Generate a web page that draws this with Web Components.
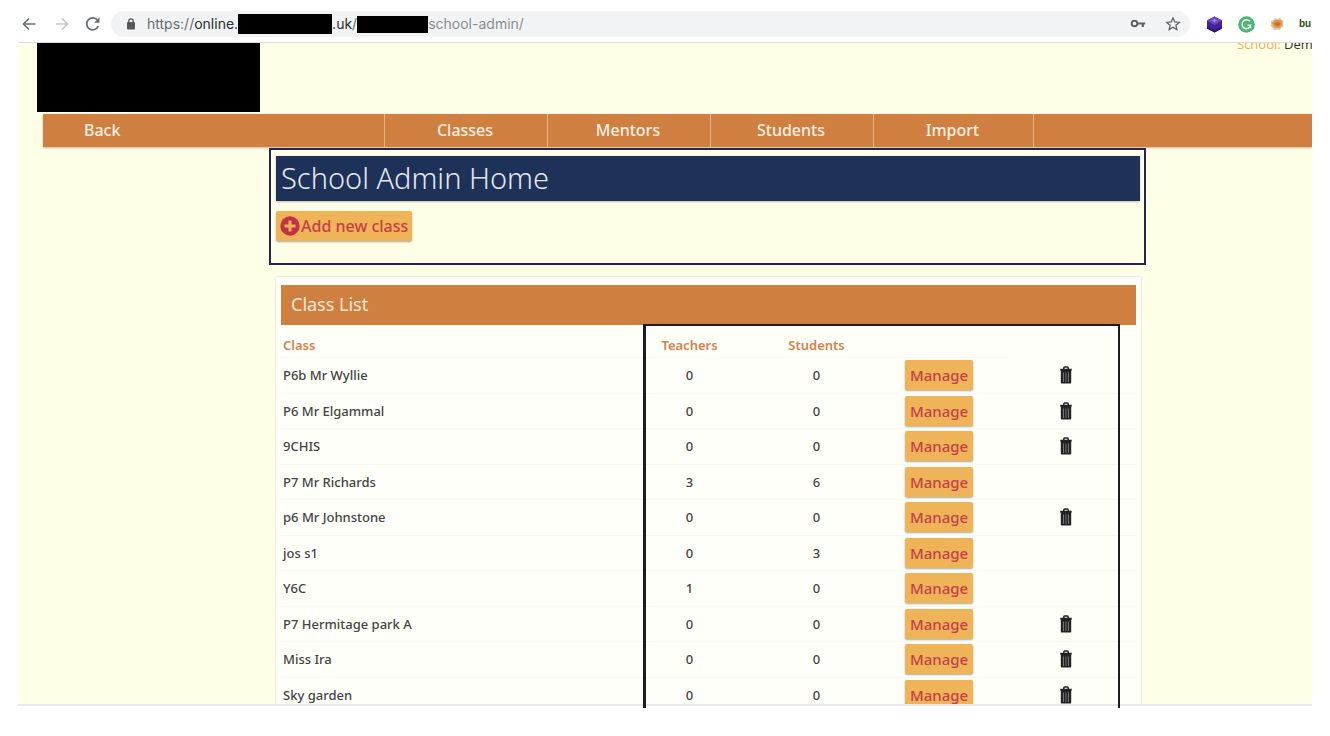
<!DOCTYPE html>
<html lang="en">
<head>
<meta charset="utf-8">
<title>School Admin Home</title>
<style>
html, body { margin: 0; height: 100%; }
body { background: #fff; font-family: "Noto Sans", "Open Sans", sans-serif; color: #444; overflow: hidden; }
</style>
</head>
<body>
<browser-frame>
  <address-bar slot="bar"></address-bar>
  <site-header></site-header>
  <site-nav></site-nav>
  <admin-content>
    <title-panel heading="School Admin Home"></title-panel>
    <class-list heading="Class List"></class-list>
  </admin-content>
</browser-frame>

<script>
const define = (name, html, setup) => {
  const template = document.createElement('template');
  template.innerHTML = html;
  customElements.define(name, class extends HTMLElement {
    constructor() {
      super();
      this.attachShadow({ mode: 'open' }).append(template.content.cloneNode(true));
    }
    connectedCallback() { if (setup) setup(this, this.shadowRoot); }
  });
};

define('browser-frame', `
<style>
:host { display: flex; flex-direction: column; height: 100vh; box-sizing: border-box; padding: 0 18px 28px; }
main { flex: 1; min-height: 0; position: relative; overflow: hidden; background: #fffee6; }
main::after { content: ""; position: absolute; inset: auto 0 0; height: 2px; border-top: 2px solid #e9e9e6; background: #fff; z-index: 1; }
</style>
<slot name="bar"></slot>
<main><slot></slot></main>`);

define('address-bar', `
<style>
:host { display: flex; align-items: center; height: 43px; padding-top: 6px; box-sizing: border-box; border-bottom: 1px solid #dcdcda; overflow: hidden; background: #fff; }
button { display: flex; border: 0; padding: 0; background: none; flex: none; margin-right: 16px; }
.pill { flex: 1; min-width: 0; display: flex; align-items: center; height: 26px; border-radius: 13px; background: #f1f3f4; padding: 0 9px 0 14px; }
.url { flex: 1; display: flex; align-items: center; margin-left: 10px; font: 14px/20px Inter, "Liberation Sans", sans-serif; color: #6a6d70; white-space: nowrap; min-width: 0; overflow: hidden; }
b { font-weight: 400; color: #2b2d30; }
i { display: block; background: #000; height: 20px; width: 94px; }
i.short { width: 71px; height: 17px; }
.path { color: #8b8e91; }
.pill button { margin: 0 0 0 19px; }
.ext { display: flex; align-items: center; gap: 15px; width: 106px; margin-left: 16px; flex: none; }
.ext svg { flex: none; }
.ext span { font: 700 10px/16px "Liberation Sans", sans-serif; color: #1f4d1b; }
</style>
<button aria-label="Go back"><svg width="22" height="18" viewBox="0 0 22 18" fill="none" stroke="#6b6f73" stroke-width="1.700"><path d="M17.500 9H6M11 3.500L5.500 9l5.500 5.500"/></svg></button>
<button aria-label="Go forward" style="margin-right:10px"><svg width="18" height="18" viewBox="0 0 18 18" fill="none" stroke="#c4c6c8" stroke-width="1.700"><path d="M-1 9H11M6 3.500L11.500 9 6 14.500"/></svg></button>
<button aria-label="Reload" style="margin-right:9px"><svg width="18" height="18" viewBox="0 0 18 18"><path d="M13.500 5.200A6 6 0 1 0 14.300 11" fill="none" stroke="#6b6f73" stroke-width="1.800"/><path d="M15.500 2.300v5.500h-5.500z" fill="#6b6f73"/></svg></button>
<div class="pill">
  <svg width="12" height="14" viewBox="0 0 12 14"><rect x="2" y="5" width="8" height="7.500" rx="1" fill="#55585d"/><path d="M3.800 6V4a2.200 2.200 0 0 1 4.400 0v2" fill="none" stroke="#55585d" stroke-width="1.300"/></svg>
  <div class="url" role="textbox" aria-label="Address"><span>https://</span><b>online.</b><i></i><b>.uk</b><span>/</span><i class="short"></i><span class="path">school-admin/</span></div>
  <button aria-label="Saved passwords"><svg width="16" height="16" viewBox="0 0 16 16" fill="none" stroke="#5f6368"><circle cx="4.500" cy="7.500" r="2.800" stroke-width="2"/><path d="M7 7.500h8.200M12.800 7.500v3.500" stroke-width="2.200"/></svg></button>
  <button aria-label="Bookmark this page"><svg width="16" height="16" viewBox="0 0 16 16" fill="none" stroke="#5f6368" stroke-width="1.300"><path d="M8 2l1.800 4 4.400.4-3.300 2.900 1 4.300L8 11.300l-3.900 2.300 1-4.300L1.800 6.400 6.200 6z"/></svg></button>
</div>
<div class="ext">
  <svg width="17" height="17" viewBox="0 0 17 17"><path d="M8.500 .5l7.500 4v8l-7.500 4-7.500-4v-8z" fill="#3f2593"/><path d="M8.500 .5l7.500 4-7.500 4.500L1 4.500z" fill="#6d48c4"/><path d="M1 10.500l7.500 4 7.500-4v2l-7.500 4-7.500-4z" fill="#2a1766"/><path d="M6 4.500l2.500-1.500L11 4.500 8.500 6z" fill="#a58ae6"/></svg>
  <svg width="17" height="17" viewBox="0 0 17 17"><circle cx="8.500" cy="8.500" r="8.300" fill="#4fb276"/><path d="M11.800 5.300A4.400 4.400 0 1 0 12.800 9.200H9.600M12.600 9.200v3" fill="none" stroke="#eefaf2" stroke-width="1.500"/></svg>
  <svg width="14" height="15" viewBox="0 0 14 15"><path d="M1 4l2.500-1L5 1l2 1 3-1.500L11.500 3l2 1-.5 3.500.5 2-2.500 1.500-1 2-3-.5-2.500.5-2-2.500L.5 9 1 6.500z" fill="#d3c6b8"/><path d="M2 6L5.500 3l6 .3.800 4.200-3 3.500-5-.5z" fill="#e8933f"/><path d="M4.500 6.500l3-1.500 3 1-1 2.500-3 .5z" fill="#c96f24"/></svg>
  <span>bu</span>
</div>`);

define('site-header', `
<style>
:host { display: flex; justify-content: space-between; height: 71px; padding-left: 19px; }
.logo { width: 223px; height: 69px; background: #000; }
p { margin: -9px 0 0; width: 75px; font: 500 13px/20px "Open Sans", sans-serif; white-space: nowrap; color: #333; }
span { color: #f0ae50; }
</style>
<div class="logo"></div>
<p><span>School:</span> Dem</p>`);

define('site-nav', `
<style>
:host { display: block; margin-left: 25px; background: #cf7f3f; box-shadow: 0 1px 2px rgba(90, 60, 20, .35); }
nav { display: grid; grid-template-columns: 342fr 163fr 163fr 163fr 160fr 278fr; height: 33px; }
a { display: flex; align-items: center; justify-content: center; box-sizing: border-box; padding: 0 2px 2px 0; color: #fdf1e3; font: 500 16px/24px "Noto Sans", sans-serif; text-decoration: none; border-right: 1px solid #e9b48a; }
a:first-child { justify-content: flex-start; padding-left: 41px; }
</style>
<nav><a href="#back">Back</a><a href="#classes">Classes</a><a href="#mentors">Mentors</a><a href="#students">Students</a><a href="#import">Import</a></nav>`);

define('admin-content', `
<style>
:host { display: flex; flex-direction: column; gap: 12px; margin: 0 166px 0 251px; }
</style>
<slot></slot>`);

define('title-panel', `
<style>
:host { display: block; height: 117px; box-sizing: border-box; border: 2px solid #29234f; padding: 6px 4px 0 5px; margin-top: 1px; }
h1 { margin: 0 0 10px; background: #1e3158; color: #e4e8ee; font: 300 29px/43px "Noto Sans", sans-serif; padding: 0 0 2px 5px; box-shadow: 0 1px 2px rgba(0, 0, 0, .25); }
button { display: flex; align-items: center; gap: 1px; height: 30px; padding: 0 4px; border: 0; border-radius: 2px; background: #efb457; color: #c4404a; font: 500 16px/24px "Noto Sans", sans-serif; box-shadow: 0 1px 2px rgba(0, 0, 0, .35); }
</style>
<h1></h1>
<button><svg width="20" height="20" viewBox="0 0 20 20"><circle cx="10" cy="10" r="9.700" fill="#c13149"/><path d="M10 4.500v11M4.500 10h11" stroke="#efb457" stroke-width="3"/></svg>Add new class</button>`,
(host, root) => { root.querySelector('h1').textContent = host.getAttribute('heading'); });

const CLASSES = [
  ['P6b Mr Wyllie', 0, 0], ['P6 Mr Elgammal', 0, 0], ['9CHIS', 0, 0], ['P7 Mr Richards', 3, 6],
  ['p6 Mr Johnstone', 0, 0], ['jos s1', 0, 3], ['Y6C', 1, 0], ['P7 Hermitage park A', 0, 0],
  ['Miss Ira', 0, 0], ['Sky garden', 0, 0]
];
const TRASH = `<button class="bin" aria-label="Delete class"><svg width="12" height="18" viewBox="0 0 12 18"><path d="M3.800 3V1.900Q3.800 1 4.700 1h2.600q.9 0 .9.900V3" fill="none" stroke="#222" stroke-width="1.500"/><path d="M.3 2.800h11.400v2H.3zM.8 4.600h10.400v12.200q0 .7-.7.700h-9q-.7 0-.7-.7z" fill="#222"/><path d="M3.500 6.500v9.500M6 6.500v9.500M8.500 6.500v9.500" stroke="#8a8a88" stroke-width=".8"/></svg></button>`;

define('class-list', `
<style>
:host { display: block; margin: 0 5px 0 7px; padding: 8px 5px; background: #fffffa; box-shadow: 0 0 2px rgba(0, 0, 0, .18); }
h2 { margin: 0; background: #cf7f3f; color: #fbe9d8; font: 400 18px/38px "Noto Sans", sans-serif; padding: 0 0 2px 10px; }
.wrap { position: relative; }
table { width: 100%; border-collapse: collapse; table-layout: fixed; font: 500 13px/20px "Noto Sans", sans-serif; }
.num { width: 127px; }
th, td { padding: 0 4px 0 0; text-align: center; border-bottom: 1px solid #f8f7f1; box-sizing: border-box; }
th:first-child, td:first-child { text-align: left; padding-left: 2px; }
th { color: #d3824a; font-weight: 600; height: 32px; padding-top: 9px; }
th:empty:last-child { border: 0; }
tr { height: 36px; }
tr:nth-child(even) { height: 35px; }
thead tr { height: 32px; }
.act { padding-right: 13px; }
button { border: 0; font: 500 15px/24px "Noto Sans", sans-serif; }
.manage { display: block; margin: 0 auto; width: 68px; height: 30px; padding: 0; border-radius: 2px; background: #efb457; color: #c4404a; box-shadow: 0 1px 2px rgba(0, 0, 0, .35); }
.bin { display: block; margin: 0 auto; padding: 0; background: none; height: 18px; line-height: 0; }
.outline { position: absolute; inset: -1px 16px -60px 362px; border: 2px solid #1c1c1c; border-left-width: 3px; z-index: 2; pointer-events: none; }
</style>
<h2></h2>
<div class="wrap">
  <table>
    <colgroup><col><col class="num"><col class="num"><col class="num"><col class="num"></colgroup>
    <thead><tr><th>Class</th><th>Teachers</th><th>Students</th><th></th><th></th></tr></thead>
    <tbody></tbody>
  </table>
  <div class="outline"></div>
</div>`,
(host, root) => {
  root.querySelector('h2').textContent = host.getAttribute('heading');
  root.querySelector('tbody').innerHTML = CLASSES.map(([name, teachers, students]) =>
    `<tr><td>${name}</td><td>${teachers}</td><td>${students}</td><td class="act"><button class="manage">Manage</button></td><td class="act">${teachers + students ? '' : TRASH}</td></tr>`).join('');
});
</script>
</body>
</html>
